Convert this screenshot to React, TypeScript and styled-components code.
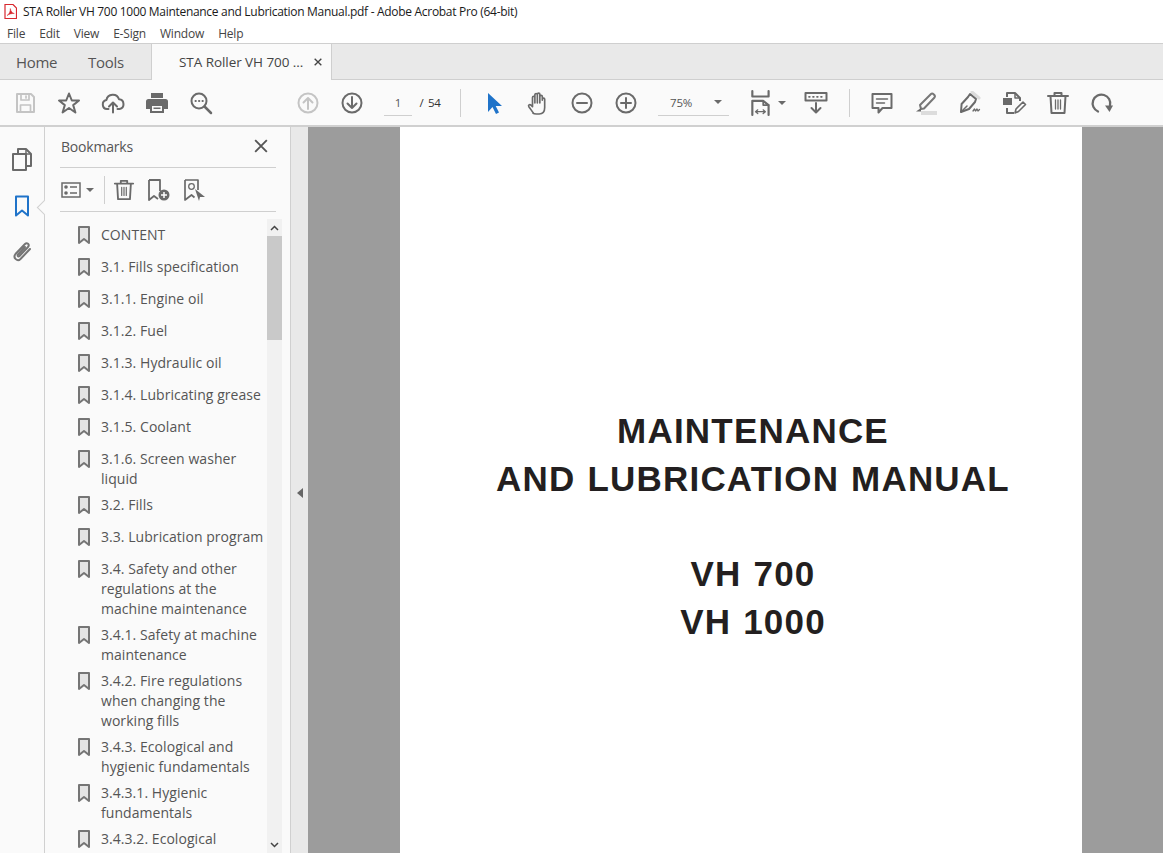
import React from 'react';
import styled, { createGlobalStyle } from 'styled-components';

const GlobalStyle = createGlobalStyle`
	html, body {
		margin: 0;
		padding: 0;
		height: 100%;
		overflow: hidden;
		background: #fff;
	}
	#root {
		height: 100%;
	}
`;

const uiFont = `'Open Sans', 'Noto Sans', 'Liberation Sans', sans-serif`;

const Window = styled.div`
	width: 1163px;
	height: 853px;
	display: flex;
	flex-direction: column;
	overflow: hidden;
	font-family: ${uiFont};
	color: #4b4b4b;
`;

const TitleBar = styled.div`
	height: 23px;
	display: flex;
	align-items: center;
	gap: 6px;
	padding-left: 4px;
	background: #fff;
	font-size: 12px;
	letter-spacing: -0.3px;
	color: #1a1a1a;
	white-space: nowrap;
`;

const MenuBar = styled.div`
	height: 20px;
	display: flex;
	align-items: center;
	gap: 14px;
	padding-left: 7px;
	background: #fff;
	font-size: 12px;
	letter-spacing: -0.2px;
	color: #444;
`;

const TabBar = styled.div`
	height: 37px;
	display: flex;
	background: #e9e9e9;
	border-top: 1px solid #cfcfcf;
	border-bottom: 1px solid #cfcfcf;
	box-sizing: border-box;
`;

const NavTab = styled.div<{ $w: number; $pad: number }>`
	width: ${(p) => p.$w}px;
	padding-left: ${(p) => p.$pad}px;
	box-sizing: border-box;
	display: flex;
	align-items: center;
	font-size: 15px;
	letter-spacing: -0.3px;
	color: #555;
`;

const DocTab = styled.div`
	width: 181px;
	margin-bottom: -1px;
	display: flex;
	align-items: center;
	justify-content: space-between;
	box-sizing: border-box;
	padding: 0 9px 0 27px;
	background: #fafafa;
	border-left: 1px solid #cfcfcf;
	border-right: 1px solid #cfcfcf;
	font-size: 13.5px;
	letter-spacing: -0.06px;
	color: #444;
	white-space: nowrap;
`;

const Toolbar = styled.div`
	height: 47px;
	display: flex;
	align-items: center;
	padding-left: 3px;
	background: #fafafa;
	border-bottom: 2px solid #d0d0d0;
	box-sizing: border-box;
`;

const ToolButton = styled.div<{ $w?: number; $after?: number; $off?: boolean; $start?: boolean }>`
	width: ${(p) => p.$w ?? 44}px;
	margin-right: ${(p) => p.$after ?? 0}px;
	height: 30px;
	flex: none;
	display: flex;
	align-items: center;
	gap: 4px;
	justify-content: ${(p) => (p.$start ? 'flex-start' : 'center')};
	color: ${(p) => (p.$off ? '#c4c4c4' : '#6a6a6a')};
`;

const PageInput = styled.div`
	width: 28px;
	height: 26px;
	margin-left: 10px;
	flex: none;
	display: flex;
	align-items: center;
	justify-content: center;
	border-bottom: 1px solid #cfcfcf;
	font-size: 11.5px;
	color: #555;
`;

const PageTotal = styled.div`
	width: 32px;
	margin-left: 2px;
	flex: none;
	font-size: 11.5px;
	letter-spacing: -0.3px;
	color: #333;
	word-spacing: 2px;
	text-align: center;
`;

const ToolSep = styled.div<{ $left: number; $right: number }>`
	width: 1px;
	height: 28px;
	flex: none;
	margin: 0 ${(p) => p.$right}px 0 ${(p) => p.$left}px;
	background: #cfcfcf;
`;

const ZoomBox = styled.div`
	width: 71px;
	height: 26px;
	margin: 0 19px 0 10px;
	flex: none;
	box-sizing: border-box;
	display: flex;
	align-items: center;
	justify-content: space-between;
	padding: 0 7px 0 12px;
	border-bottom: 1px solid #cfcfcf;
	font-size: 11.5px;
	letter-spacing: -0.2px;
	color: #555;
`;

const Caret = styled.span`
	width: 0;
	height: 0;
	flex: none;
	border-left: 4px solid transparent;
	border-right: 4px solid transparent;
	border-top: 4px solid #6a6a6a;
`;

const Main = styled.div`
	flex: 1;
	min-height: 0;
	display: flex;
`;

const Rail = styled.div`
	width: 45px;
	flex: none;
	box-sizing: border-box;
	padding-top: 21px;
	display: flex;
	flex-direction: column;
	align-items: center;
	gap: 23px;
	background: #fafafa;
	border-right: 1px solid #d0d0d0;
	position: relative;
`;

const RailNotch = styled.span`
	position: absolute;
	right: -6px;
	top: 75px;
	width: 10px;
	height: 10px;
	background: #fafafa;
	border-left: 1px solid #d0d0d0;
	border-bottom: 1px solid #d0d0d0;
	transform: rotate(45deg);
`;

const Panel = styled.div`
	width: 245px;
	flex: none;
	display: flex;
	flex-direction: column;
	min-height: 0;
	background: #fafafa;
`;

const PanelHead = styled.div`
	height: 41px;
	margin: 0 14px 0 15px;
	display: flex;
	align-items: center;
	justify-content: space-between;
	border-bottom: 1px solid #cfcfcf;
	box-sizing: border-box;
	padding: 0 8px 2px 1px;
	font-size: 14px;
	letter-spacing: -0.2px;
	color: #555;
`;

const PanelTools = styled.div`
	height: 44px;
	margin: 0 14px 0 15px;
	display: flex;
	align-items: center;
	gap: 12px;
	border-bottom: 1px solid #cfcfcf;
	box-sizing: border-box;
	color: #6a6a6a;
`;

const ListPick = styled.div`
	display: flex;
	align-items: center;
	gap: 5px;
	margin-left: 1px;
`;

const PanelToolSep = styled.div`
	width: 1px;
	height: 28px;
	margin: 0 -4px 0 -2px;
	background: #cfcfcf;
`;

const ListArea = styled.div`
	flex: 1;
	min-height: 0;
	display: flex;
	padding-top: 7px;
	overflow: hidden;
`;

const BookmarkList = styled.div`
	width: 222px;
	flex: none;
	padding-left: 32px;
	box-sizing: border-box;
`;

const BookmarkRow = styled.div`
	min-height: 32px;
	box-sizing: border-box;
	padding-top: 6px;
	display: flex;
	gap: 10px;
`;

const BookmarkIcon = styled.div`
	width: 14px;
	flex: none;
	padding-top: 1px;
	color: #757575;
`;

const BookmarkText = styled.div`
	font-size: 14px;
	line-height: 20px;
	letter-spacing: 0.05px;
	color: #555;
	width: 164px;
`;

const ScrollTrack = styled.div`
	width: 15px;
	flex: none;
	display: flex;
	flex-direction: column;
	align-items: center;
	background: #f1f1f1;
	height: 634px;
`;

const ScrollArrow = styled.div`
	height: 17px;
	flex: none;
	display: flex;
	align-items: center;
	justify-content: center;
	color: #444;
`;

const ScrollThumb = styled.div`
	width: 15px;
	height: 104px;
	flex: none;
	background: #c9c9c9;
`;

const ScrollFill = styled.div`
	flex: 1;
`;

const Splitter = styled.div`
	width: 18px;
	flex: none;
	display: flex;
	align-items: center;
	justify-content: center;
	padding-top: 6px;
	background: #e9e9e9;
	border-left: 1px solid #d0d0d0;
	box-sizing: border-box;
`;

const SplitArrow = styled.span`
	width: 0;
	height: 0;
	border-top: 5px solid transparent;
	border-bottom: 5px solid transparent;
	border-right: 6px solid #666;
`;

const Stage = styled.div`
	flex: 1;
	min-width: 0;
	display: flex;
	justify-content: flex-start;
	padding-left: 92px;
	background: #9c9c9c;
`;

const Sheet = styled.div`
	width: 682px;
	flex: none;
	box-sizing: border-box;
	padding: 280px 0 0 24px;
	background: #fff;
	display: flex;
	flex-direction: column;
	align-items: center;
	font-family: 'Liberation Sans', Arial, sans-serif;
	font-weight: 700;
	font-size: 35px;
	line-height: 48px;
	letter-spacing: 1.2px;
	word-spacing: 1px;
	color: #231f20;
	white-space: nowrap;
`;

const SheetGap = styled.div`
	height: 47px;
`;

const Ico = ({ children, s = 24, vb = 24 }: { children: React.ReactNode; s?: number; vb?: number }) => (
	<svg width={s} height={s} viewBox={`0 0 ${vb} ${vb}`} fill="none" stroke="currentColor" strokeWidth="2" strokeLinejoin="round" strokeLinecap="round">
		{children}
	</svg>
);

const PdfIcon = () => (
	<svg width="13" height="15" viewBox="0 0 13 15" fill="none" stroke="#d8282f" strokeWidth="1.200">
		<path d="M1 .5h8l3.500 3.500v10.500h-11.500z" fill="#fff" />
		<path d="M3 11.500c2-1 3.500-4 3.300-7 .6 3 2 4.500 4 5-2.500-.2-5 .5-7.300 2z" fill="#d8282f" strokeWidth=".5" />
	</svg>
);

const SaveIcon = () => (
	<Ico>
		<path d="M4 3h14l3 3v15H4z" />
		<path d="M8 3v6h8V3M13 5v2M7.500 21v-7h10v7" strokeWidth="1.700" />
	</Ico>
);
const StarIcon = () => (
	<Ico>
		<path d="M12 2.500l2.800 7h7.200l-5.800 4.600 2.200 7.400-6.400-4.500-6.400 4.500 2.200-7.400L2 9.500h7.200z" />
	</Ico>
);
const UploadIcon = () => (
	<Ico>
		<path d="M7.500 18H6a4.500 4.500 0 0 1-.6-8.900A6.500 6.500 0 0 1 18 8.300a4.900 4.900 0 0 1 .5 9.700H16.500" />
		<path d="M12 21.500V12M8 15.500l4-4 4 4" />
	</Ico>
);
const PrintIcon = () => (
	<svg width="24" height="24" viewBox="0 0 24 24" fill="currentColor">
		<path d="M6 2h12v5H6z" />
		<path fillRule="evenodd" d="M3.500 8h17A2.500 2.500 0 0 1 23 10.500V18h-4v4H5v-4H1v-7.500A2.500 2.500 0 0 1 3.500 8zM7 15v5h10v-5zm1.500 1.500h7V18h-7z" />
	</svg>
);
const FindIcon = () => (
	<Ico>
		<circle cx="10" cy="10" r="7.500" />
		<path d="M15.500 15.500l6.500 6.500" strokeWidth="2.500" />
		<path d="M6.500 10h.3M10 10h.3M13.500 10h.3" />
	</Ico>
);
const CircleArrow = ({ up }: { up?: boolean }) => (
	<Ico>
		<circle cx="12" cy="12" r="9.500" />
		{up ? <path d="M12 18V7M7.500 11.500L12 7l4.500 4.500" /> : <path d="M12 6v11M7.500 12.500L12 17l4.500-4.500" />}
	</Ico>
);
const PointerIcon = () => (
	<svg width="24" height="24" viewBox="0 0 24 24" fill="#1f73c9">
		<path d="M6 2v19l4.500-5 3.500 7 3-1.500-3.300-6.500H20z" />
	</svg>
);
const HandIcon = () => (
	<svg width="22" height="24" viewBox="0 0 24 26" fill="none" stroke="currentColor" strokeWidth="1.800" strokeLinejoin="round" strokeLinecap="round">
		<path d="M7 24c-1.500-2-3.500-5-5-7-1-1.500.8-3 2.300-1.600L6 17V7c0-1.800 2.600-1.800 2.600 0v6V4c0-1.800 2.700-1.800 2.700 0v9V3.500c0-1.800 2.700-1.800 2.700 0V13V6c0-1.800 2.700-1.800 2.700 0v4-1c0-1.800 2.600-1.800 2.600 0V18c0 4-2 7-6 7h-3c-2 0-3-.2-3.800-1z" />
	</svg>
);
const ZoomCircle = ({ plus }: { plus?: boolean }) => (
	<Ico>
		<circle cx="12" cy="12" r="9.500" />
		<path d={plus ? 'M7 12h10M12 7v10' : 'M7 12h10'} />
	</Ico>
);
const FitIcon = () => (
	<Ico s={26}>
		<path d="M4 1v5h15V1" />
		<path d="M4 23V10h10l5 4v9" />
		<path d="M14 10v4h5" strokeWidth="1.500" />
		<path d="M7 20h9M7 20l2-1.700M7 20l2 1.700M16 20l-2-1.700M16 20l-2 1.700" strokeWidth="1.200" />
	</Ico>
);
const ScrollModeIcon = () => (
	<Ico>
		<rect x="1.500" y="2" width="21" height="7.500" strokeWidth="2" />
		<path d="M5 5.800h.8M9 5.800h.8M13 5.800h.8M17 5.800h.8" strokeWidth="1.700" />
		<path d="M12 12v9M7.500 17l4.500 4.500 4.500-4.500" />
	</Ico>
);
const CommentIcon = () => (
	<Ico>
		<path d="M2.500 3h19v14h-9l-4 4.500V17h-6z" />
		<path d="M6.500 8h11M6.500 12h8" strokeWidth="1.500" />
	</Ico>
);
const HighlightIcon = () => (
	<svg width="24" height="24" viewBox="0 0 24 24" fill="none">
		<path d="M6 14L17 3c1.500-1.500 5 1.500 3.500 3.500L10 17.500 7 18z" stroke="#777" strokeWidth="2" strokeLinejoin="round" />
		<path d="M7 17L2 20.500h5z" fill="#6a6a6a" />
		<path d="M7 20h16v4H7z" fill="#dcdcdc" />
	</svg>
);
const SignIcon = () => (
	<svg width="26" height="24" viewBox="0 0 26 24" fill="none" stroke="#6a6a6a" strokeWidth="2" strokeLinejoin="round" strokeLinecap="round">
		<path d="M15 1l7 6" stroke="#dcdcdc" strokeWidth="3" />
		<path d="M13 3l6 5-1 3-6 7-8 3 .6-8 6.400-7z" fill="#fafafa" />
		<path d="M4 21l6-6" strokeWidth="1.500" />
		<path d="M16 20l1.500-2 1 2 1.500-2 1 2 1.500-1.500" strokeWidth="1.300" />
	</svg>
);
const EditDocIcon = () => (
	<svg width="26" height="24" viewBox="0 0 26 24" fill="none" stroke="#6a6a6a" strokeWidth="2" strokeLinejoin="round">
		<path d="M6 6V2h8l5 5v3M6 17v5h7" />
		<path d="M14 2v5h5" strokeWidth="1.500" />
		<rect x="2" y="7" width="9" height="7" fill="#6a6a6a" stroke="none" />
		<path d="M14 22l1-4 7-7 2.500 2.500-7 7z" fill="#fafafa" strokeWidth="1.600" />
	</svg>
);
const TrashIcon = ({ s = 24 }: { s?: number }) => (
	<Ico s={s}>
		<path d="M2 5h20M8.500 5V2h7v3M4.500 5l1 17h13l1-17" />
		<path d="M9.500 9v9M12 9v9M14.500 9v9" strokeWidth="1.300" />
	</Ico>
);
const RotateIcon = () => (
	<Ico>
		<path d="M8 20.500a8.800 8.800 0 1 1 12-6" strokeWidth="2.300" />
		<path d="M15 14.500h8l-3.500 6.500z" fill="currentColor" stroke="none" />
	</Ico>
);
const PagesIcon = () => (
	<svg width="22" height="24" viewBox="0 0 22 24" fill="none" stroke="#6a6a6a" strokeWidth="2" strokeLinejoin="round">
		<path d="M7 5V1h8l5 5v12h-5" />
		<path d="M15 1v5h5" strokeWidth="1.500" />
		<path d="M2 6h13v16H2z" />
	</svg>
);
const RailBookmark = () => (
	<svg width="16" height="22" viewBox="0 0 16 22" fill="none" stroke="#1f73c9" strokeWidth="2" strokeLinejoin="round">
		<path d="M2 1.500h12v19l-6-5-6 5z" />
	</svg>
);
const ClipIcon = () => (
	<svg width="24" height="24" viewBox="0 0 24 24" fill="none" stroke="#757575" strokeWidth="2" strokeLinecap="round">
		<path d="M20 9l-9.500 10c-3 3-8 -1-5-5L15 4c2-2 5 .5 3 3l-8.500 9c-1 1-2.500 0-1.500-1.500L15 7" />
	</svg>
);
const CloseX = ({ s, w }: { s: number; w: number }) => (
	<svg width={s} height={s} viewBox="0 0 12 12" stroke="currentColor" strokeWidth={w} fill="none">
		<path d="M1 1l10 10M11 1L1 11" />
	</svg>
);
const OptionsIcon = () => (
	<svg width="20" height="16" viewBox="0 0 20 16" fill="none" stroke="currentColor" strokeWidth="1.500">
		<rect x="1" y="1" width="18" height="14" />
		<circle cx="5" cy="5" r="1.800" fill="currentColor" stroke="none" />
		<circle cx="5" cy="11" r="1.800" fill="currentColor" stroke="none" />
		<path d="M9 5h7M9 11h7" />
	</svg>
);
const BookmarkAdd = () => (
	<svg width="24" height="24" viewBox="0 0 24 24" fill="none" stroke="currentColor" strokeWidth="1.800" strokeLinejoin="round">
		<path d="M2 2h11v11M2 2v20l5-4 4 3" />
		<circle cx="17" cy="17" r="5.500" fill="currentColor" stroke="none" />
		<path d="M14 17h6M17 14v6" stroke="#fff" strokeWidth="1.500" />
	</svg>
);
const BookmarkSeek = () => (
	<svg width="24" height="24" viewBox="0 0 24 24" fill="none" stroke="currentColor" strokeWidth="1.700" strokeLinejoin="round">
		<path d="M2 2h13v10M2 2v20l6.500-5 3 2.500" />
		<circle cx="8.500" cy="8.500" r="2.800" strokeWidth="1.300" />
		<path d="M12 11l10 8h-5l-1 4z" fill="currentColor" stroke="none" />
	</svg>
);
const RowMark = () => (
	<svg width="14" height="19" viewBox="0 0 14 19" fill="#e4e4e4" stroke="currentColor" strokeWidth="2" strokeLinejoin="round">
		<path d="M2 1h10v16l-5-4-5 4z" />
	</svg>
);
const Chevron = ({ down }: { down?: boolean }) => (
	<svg width="9" height="6" viewBox="0 0 9 6" fill="none" stroke="currentColor" strokeWidth="1.500">
		<path d={down ? 'M1 1l3.500 3.500L8 1' : 'M1 5l3.500-3.500L8 5'} />
	</svg>
);

const bookmarks = [
	'CONTENT',
	'3.1. Fills specification',
	'3.1.1. Engine oil',
	'3.1.2. Fuel',
	'3.1.3. Hydraulic oil',
	'3.1.4. Lubricating grease',
	'3.1.5. Coolant',
	'3.1.6. Screen washer liquid',
	'3.2. Fills',
	'3.3. Lubrication program',
	'3.4. Safety and other regulations at the machine maintenance',
	'3.4.1. Safety at machine maintenance',
	'3.4.2. Fire regulations when changing the working fills',
	'3.4.3. Ecological and hygienic fundamentals',
	'3.4.3.1. Hygienic fundamentals',
	'3.4.3.2. Ecological',
];

const App = () => (
	<Window>
		<GlobalStyle />
		<TitleBar>
			<PdfIcon />
			STA Roller VH 700 1000 Maintenance and Lubrication Manual.pdf - Adobe Acrobat Pro (64-bit)
		</TitleBar>
		<MenuBar>
			<span>File</span>
			<span>Edit</span>
			<span>View</span>
			<span>E-Sign</span>
			<span>Window</span>
			<span>Help</span>
		</MenuBar>
		<TabBar>
			<NavTab $w={72} $pad={16}>Home</NavTab>
			<NavTab $w={79} $pad={16}>Tools</NavTab>
			<DocTab>
				STA Roller VH 700 ...
				<CloseX s={8} w={2} />
			</DocTab>
		</TabBar>
		<Toolbar>
			<ToolButton $off><SaveIcon /></ToolButton>
			<ToolButton><StarIcon /></ToolButton>
			<ToolButton><UploadIcon /></ToolButton>
			<ToolButton><PrintIcon /></ToolButton>
			<ToolButton $after={63}><FindIcon /></ToolButton>
			<ToolButton $off><CircleArrow up /></ToolButton>
			<ToolButton><CircleArrow /></ToolButton>
			<PageInput>1</PageInput>
			<PageTotal>/ 54</PageTotal>
			<ToolSep $left={14} $right={11} />
			<ToolButton><PointerIcon /></ToolButton>
			<ToolButton><HandIcon /></ToolButton>
			<ToolButton><ZoomCircle /></ToolButton>
			<ToolButton><ZoomCircle plus /></ToolButton>
			<ZoomBox>75%<Caret /></ZoomBox>
			<ToolButton $w={46} $start><FitIcon /><Caret /></ToolButton>
			<ToolButton><ScrollModeIcon /></ToolButton>
			<ToolSep $left={11} $right={10} />
			<ToolButton><CommentIcon /></ToolButton>
			<ToolButton><HighlightIcon /></ToolButton>
			<ToolButton><SignIcon /></ToolButton>
			<ToolButton><EditDocIcon /></ToolButton>
			<ToolButton><TrashIcon /></ToolButton>
			<ToolButton><RotateIcon /></ToolButton>
		</Toolbar>
		<Main>
			<Rail>
				<PagesIcon />
				<RailBookmark />
				<ClipIcon />
				<RailNotch />
			</Rail>
			<Panel>
				<PanelHead>
					Bookmarks
					<CloseX s={14} w={1.6} />
				</PanelHead>
				<PanelTools>
					<ListPick><OptionsIcon /><Caret /></ListPick>
					<PanelToolSep />
					<TrashIcon s={22} />
					<BookmarkAdd />
					<BookmarkSeek />
				</PanelTools>
				<ListArea>
					<BookmarkList>
						{bookmarks.map((label) => (
							<BookmarkRow key={label}>
								<BookmarkIcon><RowMark /></BookmarkIcon>
								<BookmarkText>{label}</BookmarkText>
							</BookmarkRow>
						))}
					</BookmarkList>
					<ScrollTrack>
						<ScrollArrow><Chevron /></ScrollArrow>
						<ScrollThumb />
						<ScrollFill />
						<ScrollArrow><Chevron down /></ScrollArrow>
					</ScrollTrack>
				</ListArea>
			</Panel>
			<Splitter><SplitArrow /></Splitter>
			<Stage>
				<Sheet>
					<span>MAINTENANCE</span>
					<span>AND LUBRICATION MANUAL</span>
					<SheetGap />
					<span>VH 700</span>
					<span>VH 1000</span>
				</Sheet>
			</Stage>
		</Main>
	</Window>
);

export default App;
